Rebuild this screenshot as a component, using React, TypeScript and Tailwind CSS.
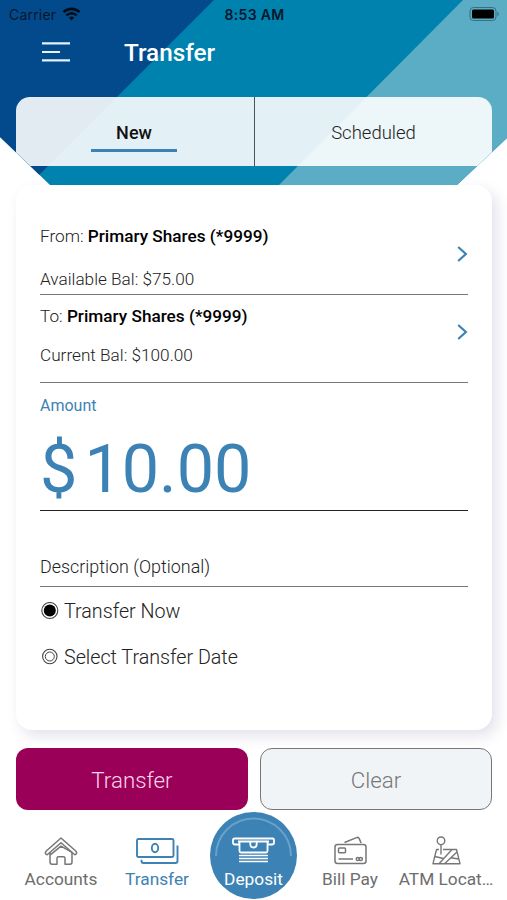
import React from 'react';
import clsx from 'clsx';

function StatusBar() {
  return (
    <div className="grid h-7 grid-cols-3 items-center pl-[9px] pr-[7px] font-['Inter'] text-[14px] text-[#07172b]">
      <div className="flex items-center gap-1.5">
        <span className="tracking-[0.2px]">Carrier</span>
        <svg width="19" height="14" viewBox="0 0 19 14" fill="none" stroke="#050d18" strokeWidth="2.6">
          <path d="M1.5 5.2a11.3 11.3 0 0 1 16 0" />
          <path d="M4.4 8.4a7.2 7.2 0 0 1 10.2 0" />
          <path d="M9.5 13.4 6.9 10.8a3.7 3.7 0 0 1 5.2 0Z" fill="#050d18" stroke="none" />
        </svg>
      </div>
      <span className="text-center font-semibold tracking-[0.3px]">8:53 AM</span>
      <svg className="justify-self-end" width="31" height="14" viewBox="0 0 31 14">
        <rect x="1" y="0.5" width="26" height="13" rx="3.5" fill="none" stroke="#3b6f7e" />
        <rect x="3" y="2.5" width="22" height="9" rx="1.5" fill="#000" />
        <path d="M28.5 4.8c1.8.8 1.8 3.6 0 4.4Z" fill="#3b6f7e" />
      </svg>
    </div>
  );
}

function Header() {
  return (
    <header className="relative h-[185px] shrink-0 [clip-path:polygon(0_0,507px_0,507px_138px,457px_185px,50px_185px,0_137px)]">
      <svg className="absolute inset-0" width="507" height="185" viewBox="0 0 507 185">
        <rect width="507" height="185" fill="#0082af" />
        <path d="M0 0H214L29 185H0Z" fill="#034a8c" />
        <path d="M463 0H507V185H279Z" fill="#5bacc5" />
      </svg>
      <div className="relative">
        <StatusBar />
        <div className="flex h-[69px] items-start pl-[42px] pt-[10px]">
          <button aria-label="Menu" className="mt-1 h-5 w-7">
            <svg width="28" height="20" viewBox="0 0 28 20" stroke="#e4f2fb" strokeWidth="2.2">
              <path d="M0 1.4h28M0 10h18M0 18.4h28" />
            </svg>
          </button>
          <h1 className="ml-[54px] text-[24.3px] leading-[30px] font-medium text-white">Transfer</h1>
        </div>
        <div className="ml-4 flex h-[69px] w-[476px] overflow-hidden rounded-t-[14px] bg-white/89">
          <button className="flex w-[239px] flex-col items-center border-r border-[#4a5459] pt-[23px] pr-[2px]">
            <span className="text-[18px] leading-[26px] font-medium text-[#111]">New</span>
            <span className="mt-[3px] h-[2.5px] w-[86px] bg-[#3d82b5]" />
          </button>
          <button className="flex flex-1 flex-col items-center pt-[23px]">
            <span className="text-[18.5px] leading-[26px] font-light text-[#222]">Scheduled</span>
          </button>
        </div>
      </div>
    </header>
  );
}

interface AccountRowProps {
  label: string;
  account: string;
  balance: string;
  className?: string;
  gap: string;
  chevron: string;
}

function AccountRow({ label, account, balance, className, gap, chevron }: AccountRowProps) {
  return (
    <button className={clsx('flex items-start justify-between border-b border-[#777] text-left', className)}>
      <div className={clsx('flex flex-col text-[17.2px] leading-5 font-light text-[#222]', gap)}>
        <span>
          {label} <b className="font-medium text-black">{account}</b>
        </span>
        <span>{balance}</span>
      </div>
      <svg className={chevron} width="11" height="16" viewBox="0 0 11 16" fill="none" stroke="#3d82b5" strokeWidth="2.2">
        <path d="M1.2 1 8.9 8 1.2 15" />
      </svg>
    </button>
  );
}

function Radio({ label, checked }: { label: string; checked?: boolean }) {
  return (
    <label className="flex h-6 items-center gap-[5px] text-[19.7px] font-light text-[#222]">
      <svg width="19" height="18" viewBox="0 0 19 18" fill="none" stroke="#444">
        <circle cx="9.8" cy="8.5" r={checked ? 8 : 7.2} strokeWidth="1.1" />
        {checked ? <circle cx="9.8" cy="8.5" r="6" fill="#000" stroke="none" /> : <circle cx="9.8" cy="8.5" r="4.5" />}
      </svg>
      <span className="pt-[2px]">{label}</span>
    </label>
  );
}

function HomeIcon() {
  return (
    <svg width="34" height="28" viewBox="0 0 34 28" fill="none" stroke="#777" strokeWidth="1.5" strokeLinejoin="round">
      <path d="M17 1 2 14.2q-1.8 2.6 1.2 3.6L17 5.8 30.8 17.8q3-1 1.2-3.6Z" />
      <path d="M6 15.4V25q0 2.2 2 2.2h5v-6q0-1.5 1.5-1.5h5q1.5 0 1.500 1.500v6h5q2 0 2-2.200v-9.600L17 9.200 6 18.200" />
    </svg>
  );
}

function BillsIcon() {
  return (
    <svg width="43" height="28" viewBox="0 0 43 28" fill="none" stroke="#3d82b5" strokeWidth="1.9">
      <rect x="1" y="2" width="36.5" height="18" rx="1.5" />
      <ellipse cx="19" cy="11" rx="3.2" ry="4.2" />
      <path d="M41.5 8.5V24q0 2-2 2H7.5q-2 0-2-2v-1.2" />
    </svg>
  );
}

function DepositIcon() {
  return (
    <svg width="43" height="26" viewBox="0 0 43 26" fill="none" stroke="#fff" strokeWidth="1.8">
      <path d="M7 7.5H3Q1 7.5 1 5.5V3Q1 1.5 2.5 1.5h38Q42 1.5 42 3v2.5q0 2-2 2h-4M6 4.5h31" />
      <path d="M7.5 4.5V14q0 1.5 1.5 1.5h25q1.5 0 1.5-1.5V4.5" />
      <path d="M18.3 4.5V7q0 3.5 3.2 3.5T24.7 7V4.5" />
      <path d="M7 18.5h29M7 21.5h29M7 24.5h29" strokeWidth="1.6" />
    </svg>
  );
}

function CardsIcon() {
  return (
    <svg width="33" height="29" viewBox="0 0 33 29" fill="none" stroke="#777" strokeWidth="1.5">
      <rect x="1" y="8.5" width="31" height="19" rx="2.5" />
      <rect x="4.5" y="12" width="7" height="4.7" rx="1" />
      <path d="M4.5 23h14.5M10.5 6.5 22.5 1.6q2-.7 2.600.8l2 4.600" />
      <circle cx="23.8" cy="23" r="1.6" />
      <circle cx="26.8" cy="23" r="1.6" />
    </svg>
  );
}

function MapIcon() {
  return (
    <svg width="29" height="29" viewBox="0 0 29 29" fill="none" stroke="#777" strokeWidth="1.4" strokeLinejoin="round">
      <circle cx="9" cy="4.8" r="3.8" />
      <path d="M9 8.6V18.5M7 13.5H4.5L1 27.7h27L24.500 13.500H11" />
      <path d="M2.800 20.500 11.500 22.500M7 27.700 20 13.500M12.500 27.700 25 16M19 21.700l7.500 1.300" />
    </svg>
  );
}

interface NavItemProps {
  label: string;
  icon: React.ReactNode;
  active?: boolean;
}

function NavItem({ label, icon, active }: NavItemProps) {
  return (
    <button className={clsx('flex w-24 flex-col items-center', active ? 'text-[#3d82b5]' : 'text-[#6d6d6d]')}>
      <span className="mt-[26px] flex h-[29px] items-center">{icon}</span>
      <span className="mt-[3px] text-[17.3px] leading-[22px] whitespace-nowrap">{label}</span>
    </button>
  );
}

export default function App() {
  return (
    <div className="flex h-[900px] w-[507px] flex-col overflow-hidden bg-white font-['Roboto',sans-serif]">
      <Header />

      <main className="mx-4 flex h-[545px] w-[476px] flex-col rounded-[16px] bg-white px-6 shadow-[5px_6px_14px_0_rgba(60,60,130,0.15)]">
        <AccountRow
          label="From:"
          account="Primary Shares (*9999)"
          balance="Available Bal: $75.00"
          className="h-[110px] pt-[41px]"
          gap="gap-[23px]"
          chevron="mt-[20px]"
        />
        <AccountRow
          label="To:"
          account="Primary Shares (*9999)"
          balance="Current Bal: $100.00"
          className="h-[88px] pt-[11px]"
          gap="gap-[19px]"
          chevron="mt-[18px]"
        />
        <div className="flex h-[128px] flex-col border-b-[1.5px] border-[#222] pt-[13px] text-[#3d82b5]">
          <span className="text-[16px] leading-5">Amount</span>
          <span className="mt-[14px] text-[66.5px] leading-[78px]">
            <span className="mr-[7px]">$</span>10.00
          </span>
        </div>
        <div className="flex h-[76px] items-end border-b border-[#777] pb-[9px] text-[17.9px] leading-5 font-light text-[#222]">
          Description (Optional)
        </div>
        <div className="flex flex-col gap-[22px] pt-3">
          <Radio label="Transfer Now" checked />
          <Radio label="Select Transfer Date" />
        </div>
      </main>

      <div className="mx-4 mt-[18px] flex h-[62px] w-[476px] gap-[12px] text-[22.3px] font-light">
        <button className="w-[232px] rounded-[12px] bg-[#9b0059] pt-[3px] text-[#f6d5e8]">Transfer</button>
        <button className="w-[232px] rounded-[12px] border-[1.5px] border-[#777] bg-[#f1f4f6] pt-[3px] text-[#777]">Clear</button>
      </div>

      <nav className="ml-[13px] flex h-[90px]">
        <NavItem label="Accounts" icon={<HomeIcon />} />
        <NavItem label="Transfer" icon={<BillsIcon />} active />
        <button className="relative mt-[2px] mr-[5px] ml-[5px] flex h-[87px] w-[87px] flex-col items-center rounded-full bg-[#3d82b5] text-white">
          <svg className="absolute inset-0" width="87" height="87" viewBox="0 0 87 87" fill="none" stroke="#68a2cc" strokeWidth="2">
            <path d="M6 44a37.5 37.5 0 0 1 75 0" />
          </svg>
          <span className="mt-[25px]"><DepositIcon /></span>
          <span className="mt-[5px] text-[17.3px] leading-[22px]">Deposit</span>
        </button>
        <NavItem label="Bill Pay" icon={<CardsIcon />} />
        <NavItem label="ATM Locat…" icon={<MapIcon />} />
      </nav>
    </div>
  );
}
